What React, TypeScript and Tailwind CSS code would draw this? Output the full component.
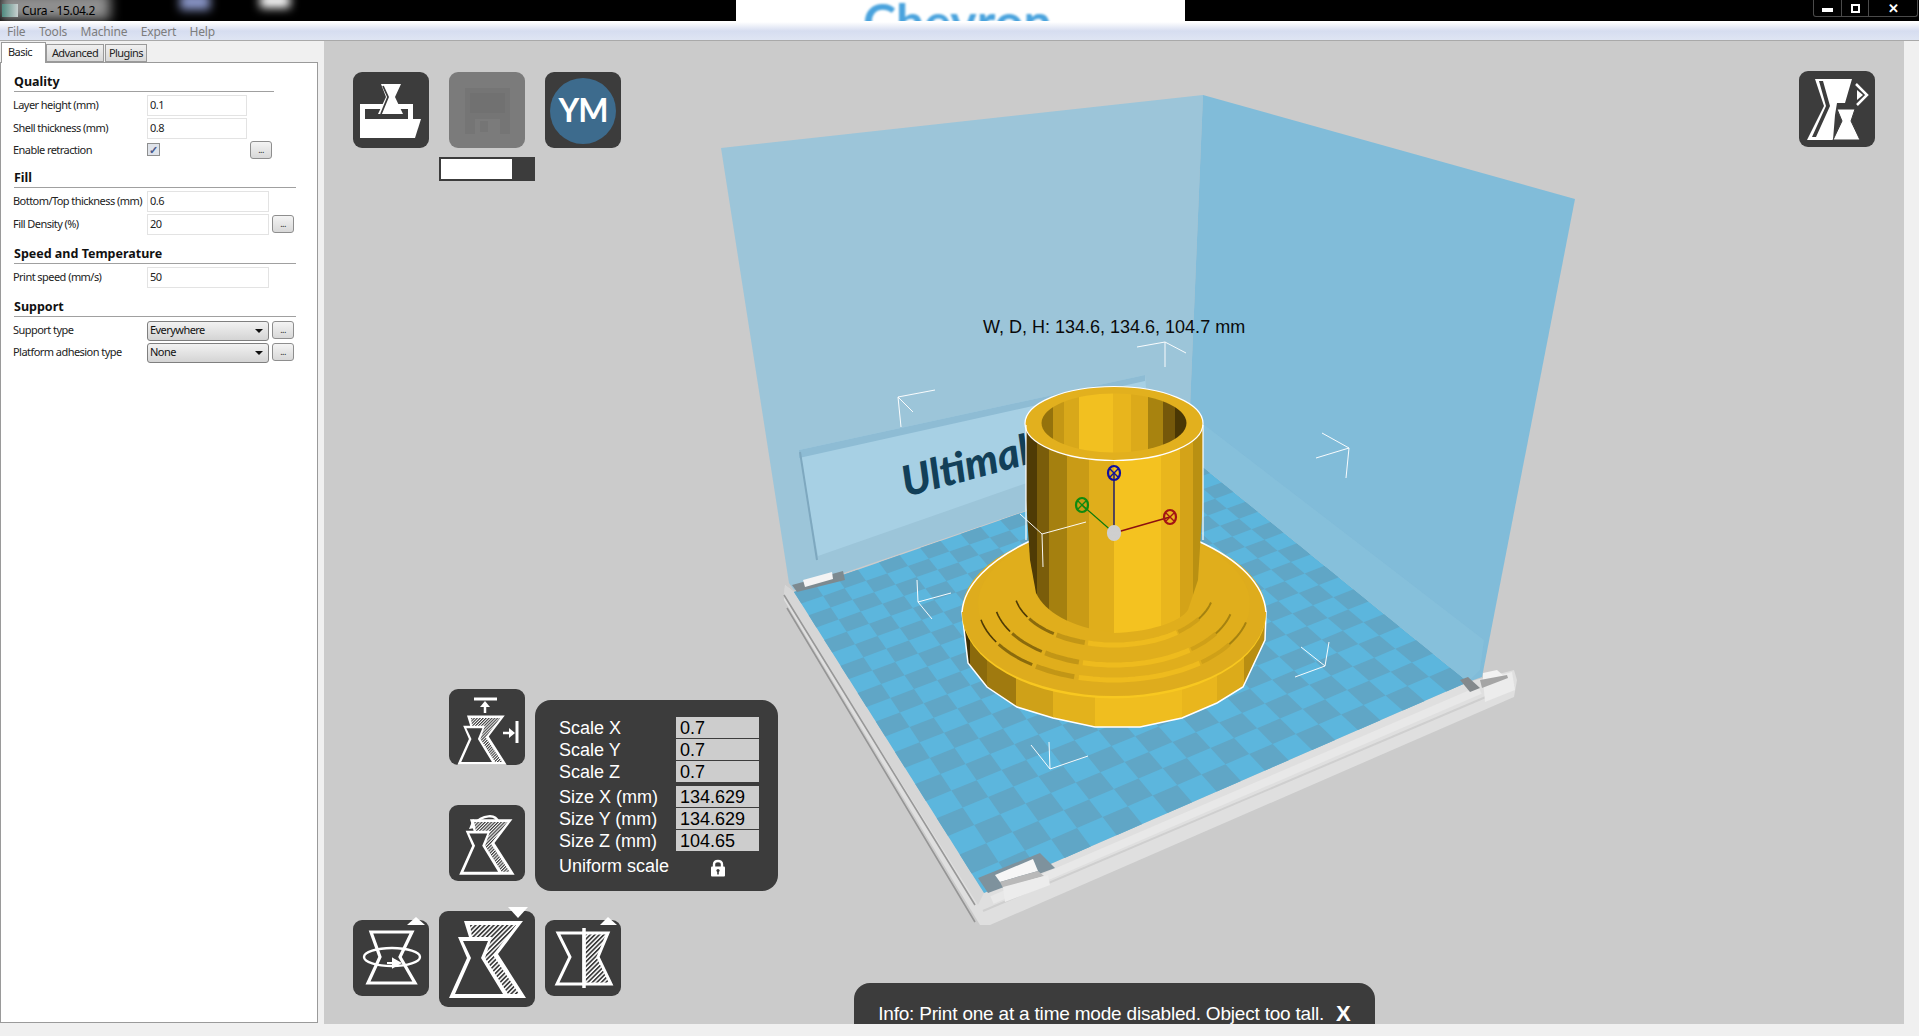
import React from 'react';

const uiFont = 'font-["Noto_Sans",sans-serif]';
const toolFont = 'font-["Liberation_Sans",Arial,sans-serif]';

// projective map of the build plate: (0,0) back, (1,0) right, (1,1) front, (0,1) left
const [x0, y0, x1, y1, x2, y2, x3, y3] = [1188, 455, 1468, 682, 984, 893, 794, 592];
const den = (x1 - x2) * (y3 - y2) - (x3 - x2) * (y1 - y2);
const sx = x0 - x1 + x2 - x3;
const sy = y0 - y1 + y2 - y3;
const pg = (sx * (y3 - y2) - (x3 - x2) * sy) / den;
const ph = ((x1 - x2) * sy - sx * (y1 - y2)) / den;
function platePoint(u: number, v: number) {
  const w = pg * u + ph * v + 1;
  const x = ((x1 - x0 + pg * x1) * u + (x3 - x0 + ph * x3) * v + x0) / w;
  const y = ((y1 - y0 + pg * y1) * u + (y3 - y0 + ph * y3) * v + y0) / w;
  return `${x.toFixed(1)},${y.toFixed(1)}`;
}

function Checker() {
  const n = 20;
  const cells: React.ReactNode[] = [];
  for (let i = 0; i < n; i++) {
    for (let j = 0; j < n; j++) {
      if ((i + j) % 2 === 0) continue;
      const pts = [platePoint(i / n, j / n), platePoint((i + 1) / n, j / n), platePoint((i + 1) / n, (j + 1) / n), platePoint(i / n, (j + 1) / n)].join(' ');
      cells.push(<polygon key={`${i}-${j}`} points={pts} fill="#60a6c6" />);
    }
  }
  return (
    <g>
      <polygon points={`${x0},${y0} ${x1},${y1} ${x2},${y2} ${x3},${y3}`} fill="#5cb6dd" />
      {cells}
    </g>
  );
}

const brackets = [
  'M1137 347L1165 342L1186 353M1165 342V367',
  'M935 390L898 397L913 412M898 397L901 427',
  'M1322 433L1349 448L1316 458M1349 448L1346 478',
  'M1086 522L1042 534L1020 514M1042 534L1043 567',
  'M951 593L918 602L917 580M918 602L932 619',
  'M1329 642L1325 666L1301 647M1325 666L1295 677',
  'M1088 756L1050 769L1031 745M1050 769L1049 742',
];

// one step on the skirt, split in shaded stretches by angle
const ringStretches = [
  { from: 168, to: 148, width: 1.6, color: '#4f3b05' },
  { from: 148, to: 125, width: 3, color: '#8a6a0c' },
  { from: 125, to: 105, width: 5, color: '#c29616' },
  { from: 105, to: 50, width: 5, color: '#eebb1e' },
  { from: 50, to: 32, width: 4, color: '#cfa018' },
  { from: 32, to: 12, width: 2, color: '#a58210' },
];

function Ring({ cy, rx, ry }: { cy: number; rx: number; ry: number }) {
  return (
    <g fill="none">
      {ringStretches.map((s) => {
        const pts: string[] = [];
        for (let a = s.from; a >= s.to; a -= 3) {
          const r = (a * Math.PI) / 180;
          pts.push(`${(1114 + rx * Math.cos(r)).toFixed(1)},${(cy + ry * Math.sin(r)).toFixed(1)}`);
        }
        return <polyline key={s.from} points={pts.join(' ')} stroke={s.color} strokeWidth={s.width} />;
      })}
    </g>
  );
}

function Knob({ x, y, color, fill = 'none' }: { x: number; y: number; color: string; fill?: string }) {
  return (
    <g stroke={color} fill={fill} strokeWidth="2.2">
      <ellipse cx={x} cy={y} rx="6" ry="7" />
      <path d={`M${x - 4} ${y - 4}L${x + 4} ${y + 4}M${x + 4} ${y - 4}L${x - 4} ${y + 4}`} strokeWidth="1.4" />
    </g>
  );
}

function Stops({ list }: { list: [number, string][] }) {
  // hard stops, one flat colour per facet
  return (
    <>
      {list.map(([end, color], i) => (
        <React.Fragment key={i}>
          <stop offset={i === 0 ? 0 : list[i - 1][0]} stopColor={color} />
          <stop offset={end} stopColor={color} />
        </React.Fragment>
      ))}
    </>
  );
}

function Scene() {
  return (
    <svg className="absolute inset-0 h-full w-full" viewBox="324 41 1580 983">
      <defs>
        <linearGradient id="body" x1="0" x2="1" y1="0" y2="0">
          <Stops list={[[0.06, '#4f3b05'], [0.13, '#7a5d0a'], [0.234, '#a5800f'], [0.356, '#c99b16'], [0.495, '#e0ae1b'], [0.762, '#f4c220'], [0.871, '#e9b61d'], [0.941, '#d4a318'], [1, '#b99012']]} />
        </linearGradient>
        <linearGradient id="hole" x1="0" x2="1" y1="0" y2="0">
          <Stops list={[[0.08, '#94720c'], [0.154, '#c49715'], [0.26, '#d8a81a'], [0.494, '#f2c020'], [0.62, '#e8b51d'], [0.736, '#dcaa1a'], [0.84, '#a8830f'], [0.92, '#75580a'], [1, '#4a3704']]} />
        </linearGradient>
        <linearGradient id="skirt" x1="0" x2="1" y1="0" y2="0">
          <Stops list={[[0.026, '#3f2f03'], [0.083, '#8b6a0c'], [0.178, '#a07a0f'], [0.298, '#cfa118'], [0.438, '#e3b21c'], [0.586, '#f0be1f'], [0.723, '#efbd1f'], [0.838, '#e9b61d'], [0.927, '#dcab1a'], [1, '#b98e12']]} />
        </linearGradient>
      </defs>

      {/* plate rim */}
      <polygon points="785,585 794,592 984,893 1468,682 1514,670 1517,680 1514,697 990,925 980,925 974,915 784,600" fill="#dfdfdf" />
      <polygon points="785,585 794,592 984,893 978,905 784,596" fill="#d6d6d6" />
      <path d="M784 595L975 905M787 608L975 922" stroke="#8c8c8c" strokeWidth="1.6" fill="none" opacity=".85" />
      <path d="M983 911L1514 685" stroke="#cfcfcf" strokeWidth="2" fill="none" />
      <path d="M992 900L1480 690" stroke="#e8e8e8" strokeWidth="8" fill="none" />

      <Checker />

      {/* left wall and sign */}
      <polygon points="721,148 1203,95 1188,455 794,590 789,583" fill="#9cc5d9" />
      <polygon points="799,450 1145,375 1150,440 818,556" fill="#a7d0e4" />
      <polygon points="799,450 1145,375 1145,381 799,458" fill="#8ebcd4" />
      <path d="M800 452L817 560" stroke="#7ea8bf" strokeWidth="2" fill="none" />
      <text x="906" y="497" transform="rotate(-15 906 497)" fontFamily="Lato, sans-serif" fontWeight="900" fontStyle="italic" fontSize="42" fill="#123f58">Ultimaker</text>

      {/* right wall */}
      <polygon points="1203,95 1575,199 1482,677 1468,682 1188,455" fill="#81bcd9" />
      <polygon points="1188,455 1468,682 1480,670 1484,640 1198,420" fill="#8ac2dc" opacity=".55" />

      {/* clips on the plate corners */}
      <polygon points="792,585 843,571 845,580 797,592" fill="#7d8a90" />
      <polygon points="803,580 832,572 833,579 805,587" fill="#f4f4f4" />
      <polygon points="978,878 1040,853 1055,868 988,893" fill="#7e929d" />
      <polygon points="995,875 1033,859 1038,871 1000,882" fill="#f6f6f6" />
      <polygon points="1000,882 1038,871 1044,876 1003,888" fill="#b9b9b9" />
      <polygon points="1003,887 1048,875 1050,885 1005,902" fill="#ececec" />
      <polygon points="1483,680 1512,672 1515,690 1485,702" fill="#ececec" />
      <polygon points="1460,680 1468,677 1480,688 1470,692" fill="#84898c" />
      <polygon points="1483,673 1497,670 1505,677 1483,680" fill="#f2f2f2" />
      <polygon points="1480,680 1507,675 1508,678 1482,688" fill="#a5a5a5" />

      {/* printed part */}
      <polygon points="962,612 968,663 987,687 1017,707 1053,718 1095,727 1140,727 1182,718 1217,703 1243,687 1265,640 1266,612" fill="url(#skirt)" stroke="#fff" strokeWidth="1.5" />
      <ellipse cx="1114" cy="613.5" rx="152" ry="85" fill="#f8c820" />
      <ellipse cx="1114" cy="612" rx="152" ry="84" fill="#deac1d" stroke="#fff" strokeWidth="0" />
      <path d="M1030 541C990 560 964 585 962 612M1198 541C1240 560 1264 585 1266 612" fill="none" stroke="#fff" strokeWidth="1.5" />
      <ellipse cx="1114" cy="604" rx="136" ry="76" fill="#e0ae1c" />
      <Ring cy={604} rx={136} ry={76} />
      <Ring cy={598} rx={120} ry={67} />
      <Ring cy={589} rx={100} ry={56} />
      <path d="M1026 425V500L1030 560L1036 593C1045 612 1070 627 1113 633C1150 632 1180 622 1188 610L1198 580L1203 500V425Z" fill="url(#body)" />
      <ellipse cx="1114" cy="423.5" rx="89" ry="37" fill="#e2b01e" stroke="#fff" strokeWidth="1.2" />
      <ellipse cx="1114" cy="423" rx="72.5" ry="29.5" fill="url(#hole)" />
      <path d="M1026 425V540M1203 425V540" stroke="#fff" strokeWidth="1.2" fill="none" />

      {/* selection corners */}
      <path d={brackets.join('')} stroke="#fff" strokeWidth="1" fill="none" opacity=".95" />

      {/* gizmo */}
      <path d="M1114 533V473" stroke="#14146e" strokeWidth="1.4" />
      <path d="M1114 533L1082 505" stroke="#0c7a0c" strokeWidth="1.2" />
      <path d="M1114 533L1170 517" stroke="#8c1010" strokeWidth="1.4" />
      <Knob x={1114} y={473} color="#0e0ea0" />
      <Knob x={1082} y={505} color="#0f8a0f" />
      <Knob x={1170} y={517} color="#a31414" />
      <Knob x={1114} y={533} color="#cfcfcf" fill="#cfcfcf" />

      <text x="983" y="333" fontFamily="'Liberation Sans', sans-serif" fontSize="18" fill="#0a0a0a">W, D, H: 134.6, 134.6, 104.7 mm</text>
    </svg>
  );
}

function Hatch({ id }: { id: string }) {
  return (
    <pattern id={id} width="3.2" height="3.2" patternUnits="userSpaceOnUse" patternTransform="rotate(45)">
      <rect width="3.2" height="3.2" fill="#fff" />
      <rect width="1.7" height="3.2" fill="#3c3c3c" />
    </pattern>
  );
}

function ToolButton({ className, size = 76, children }: { className: string; size?: number; children: React.ReactNode }) {
  return (
    <div className={`absolute rounded-[9px] bg-[#3c3c3c] ${className}`} style={{ width: size, height: size }}>
      <svg width={size} height={size} viewBox={`0 0 ${size} ${size}`} className="overflow-visible">
        {children}
      </svg>
    </div>
  );
}

function HourglassScale({ id, s = 1, dx = 0, dy = 0 }: { id: string; s?: number; dx?: number; dy?: number }) {
  return (
    <g transform={`translate(${dx} ${dy}) scale(${s})`}>
      <Hatch id={id} />
      <path d="M10 87H87L59 43L84 10H25L30 26H19L28 47Z" fill="#fff" />
      <path d="M31 14H77L54 44L80 83H69L46 47L53 26H33Z" fill={`url(#${id})`} />
      <path d="M16 83L32 47L24 30H49L42 47L64 83Z" fill="#3c3c3c" />
    </g>
  );
}

function Triangle({ points }: { points: string }) {
  return <polygon points={points} fill="#fff" />;
}

function LockGlyph() {
  return (
    <svg width="16" height="18" viewBox="0 0 16 18">
      <path d="M4 8V5.5C4 3 5.8 2 8 2C10.2 2 12 3 12 5.5V8" fill="none" stroke="#fff" strokeWidth="2.4" />
      <rect x="1" y="7.5" width="14" height="10" rx="1" fill="#fff" />
      <circle cx="8" cy="11.5" r="1.6" fill="#3c3c3c" />
      <rect x="7.2" y="12" width="1.6" height="3.5" fill="#3c3c3c" />
    </svg>
  );
}

function ScalePanel() {
  const rows = [
    { label: 'Scale X', value: '0.7' },
    { label: 'Scale Y', value: '0.7' },
    { label: 'Scale Z', value: '0.7' },
  ];
  const sizes = [
    { label: 'Size X (mm)', value: '134.629' },
    { label: 'Size Y (mm)', value: '134.629' },
    { label: 'Size Z (mm)', value: '104.65' },
  ];
  return (
    <div className={`absolute left-[211px] top-[659px] flex h-[191px] w-[243px] flex-col rounded-[16px] bg-[#3c3c3c] pl-[24px] pt-[17px] text-[18px] leading-[22px] text-white ${toolFont}`}>
      <div className="flex flex-col gap-px">
        {rows.map((r) => (
          <div key={r.label} className="flex h-[21px] items-center">
            <span className="w-[117px]">{r.label}</span>
            <span className="h-[21px] w-[83px] bg-[#cdcdcd] pl-[4px] text-black">{r.value}</span>
          </div>
        ))}
      </div>
      <div className="mt-[4px] flex flex-col gap-px">
        {sizes.map((r) => (
          <div key={r.label} className="flex h-[21px] items-center">
            <span className="w-[117px]">{r.label}</span>
            <span className="h-[21px] w-[83px] bg-[#cdcdcd] pl-[4px] text-black">{r.value}</span>
          </div>
        ))}
      </div>
      <div className="mt-[4px] flex h-[22px] items-center">
        <span className="w-[117px]">Uniform scale</span>
        <span className="flex w-[83px] justify-center pt-[4px]">
          <LockGlyph />
        </span>
      </div>
    </div>
  );
}

function Overlays() {
  return (
    <>
      <ToolButton className="left-[29px] top-[31px]">
        <path fillRule="evenodd" d="M7 32H60V47H55V37H12V47H7Z" fill="#fff" />
        <path d="M7 66V47H68L62 66Z" fill="#fff" />
        <path d="M28 12H48L42 25L50 42H25L33 25Z" fill="#fff" />
        <path d="M30 14L35 25L28 42" stroke="#3c3c3c" strokeWidth="1.8" fill="none" />
      </ToolButton>
      <ToolButton className="left-[125px] top-[31px] !bg-[#7b7b7b]">
        <path d="M16 16H61V62H16Z" fill="#757575" />
        <rect x="21" y="21" width="35" height="20" fill="#717171" />
        <rect x="26" y="47" width="25" height="15" fill="#7b7b7b" />
        <rect x="31" y="49" width="8" height="11" fill="#757575" />
      </ToolButton>
      <ToolButton className="left-[221px] top-[31px]">
        <circle cx="38" cy="39" r="33" fill="#3d6b8d" />
        <text x="38" y="50" textAnchor="middle" fontFamily="Lato, sans-serif" fontWeight="700" fontSize="32" letterSpacing="-1" fill="#fff">YM</text>
      </ToolButton>
      <div className="absolute left-[115px] top-[116px] flex h-[24px] w-[96px] border-2 border-[#3c3c3c] bg-[#3c3c3c]">
        <div className="h-full w-[71px] bg-white" />
      </div>

      <ToolButton className="left-[1475px] top-[30px]">
        <path d="M16 8H53L46 32H38L36 44L34 69H8L25 35Z" fill="#fff" />
        <path d="M20 10L27 35L13 66H17L31 35L24 10Z" fill="#3c3c3c" />
        <path d="M38 38H56L52 50L61 69H34L43 50Z" fill="#fff" stroke="#3c3c3c" strokeWidth="1" />
        <path d="M57 13L68 24L58 34" stroke="#fff" strokeWidth="2.5" fill="none" />
        <path d="M58 19L64 24L58 29Z" fill="#fff" />
      </ToolButton>

      <ToolButton className="left-[125px] top-[648px]">
        <path d="M25 10H48" stroke="#fff" strokeWidth="3" />
        <path d="M36 24V14" stroke="#fff" strokeWidth="2.5" />
        <path d="M31 18L36 12L41 18Z" fill="#fff" />
        <path d="M68 32V54" stroke="#fff" strokeWidth="3" />
        <path d="M54 44H62" stroke="#fff" strokeWidth="2.5" />
        <path d="M60 39L66 44L60 49Z" fill="#fff" />
        <HourglassScale id="hatchA" s={0.64} dx={2} dy={20} />
      </ToolButton>
      <ToolButton className="left-[125px] top-[764px]">
        <path d="M49 17C47 9 34 9 24 20" stroke="#fff" strokeWidth="2.5" fill="none" />
        <path d="M20 24L32 22L24 14Z" fill="#fff" />
        <HourglassScale id="hatchB" s={0.72} dx={3} dy={7} />
      </ToolButton>

      <ScalePanel />

      <ToolButton className="left-[29px] top-[879px]">
        <path d="M18 12H59L47 37L62 63H15L27 37Z" fill="none" stroke="#fff" strokeWidth="3.2" />
        <ellipse cx="39" cy="37" rx="28" ry="9" fill="none" stroke="#fff" strokeWidth="2.4" />
        <path d="M34 43H44M40 39L47 43L40 47Z" stroke="#fff" strokeWidth="2" fill="#fff" />
        <Triangle points="54,5 72,5 63,-3" />
      </ToolButton>
      <ToolButton className="left-[115px] top-[870px]" size={96}>
        <HourglassScale id="hatchC" />
        <Triangle points="69,-4 89,-4 79,7" />
      </ToolButton>
      <ToolButton className="left-[221px] top-[879px]">
        <Hatch id="hatchD" />
        <path d="M39 13H63L53 37L66 64H39Z" fill="url(#hatchD)" stroke="#fff" strokeWidth="3" />
        <path d="M39 13H13L25 37L12 64H39" fill="none" stroke="#fff" strokeWidth="3" />
        <path d="M39 8V68" stroke="#fff" strokeWidth="3.5" />
        <Triangle points="55,5 72,5 63,-3" />
      </ToolButton>

      <div className={`absolute bottom-0 left-[530px] flex h-[41px] w-[521px] items-start justify-center gap-[12px] rounded-t-[16px] bg-[#3c3c3c] pt-[21px] text-[19px] leading-[20px] text-white ${toolFont}`}>
        <span className="tracking-[-0.2px]">Info: Print one at a time mode disabled. Object too tall.</span>
        <span className="text-[22px] font-bold leading-[20px]">X</span>
      </div>
    </>
  );
}

function TextField({ value, wide }: { value: string; wide?: boolean }) {
  return (
    <div className={`flex h-[21px] items-center border border-[#e3e3e3] bg-white pl-[2px] text-[#222] ${wide ? 'w-[122px]' : 'w-[100px]'}`}>{value}</div>
  );
}

function DotsButton() {
  return (
    <div className="-mt-[2px] flex h-[18px] w-[22px] items-center justify-center rounded-[3px] border border-[#8e8e8e] bg-gradient-to-b from-[#f4f4f4] to-[#d8d8d8] text-[9px] leading-none text-[#222]">...</div>
  );
}

function SelectField({ value }: { value: string }) {
  return (
    <div className="relative flex h-[20px] w-[122px] items-center rounded-[3px] border border-[#7f7f7f] bg-gradient-to-b from-[#f2f2f2] to-[#d4d4d4] pl-[2px] text-[#111]">
      {value}
      <span className="absolute right-[5px] top-[7px] h-0 w-0 border-x-[4px] border-t-[4px] border-x-transparent border-t-[#111]" />
    </div>
  );
}

function Row({ label, children }: { label: string; children: React.ReactNode }) {
  return (
    <div className="flex h-[21px] items-center">
      <span className="w-[134px] whitespace-nowrap">{label}</span>
      <div className="flex items-center gap-[3px]">{children}</div>
    </div>
  );
}

function Heading({ title, short, className = '' }: { title: string; short?: boolean; className?: string }) {
  return (
    <div className={`mb-[3px] ml-[1px] h-[19px] border-b border-[#a0a0a0] text-[12.5px] font-bold leading-[18px] tracking-[0px] text-[#111] ${short ? 'w-[260px]' : 'w-[282px]'} ${className}`}>{title}</div>
  );
}

function SettingsPanel() {
  return (
    <div className={`flex w-[324px] shrink-0 flex-col bg-[#f0f0f0] pb-[13px] pr-[6px] pt-[1px] text-[11px] tracking-[-0.55px] text-[#222] ${uiFont}`}>
      <div className="flex h-[20px] items-end pl-[1px] text-[#222]">
        <div className="z-10 -mb-px flex h-[21px] w-[45px] items-start border border-b-0 border-[#9a9a9a] bg-white pl-[6px] pt-[1px]">Basic</div>
        <div className="flex h-[18px] w-[58px] items-center justify-center border border-[#9a9a9a] bg-gradient-to-b from-[#f0f0f0] to-[#d8d8d8]">Advanced</div>
        <div className="ml-px flex h-[18px] w-[42px] items-center justify-center border border-[#9a9a9a] bg-gradient-to-b from-[#f0f0f0] to-[#d8d8d8]">Plugins</div>
      </div>
      <div className="flex flex-1 flex-col border border-[#9a9a9a] bg-white pl-[12px] pt-[10px]">
        <Heading title="Quality" short />
        <div className="flex flex-col gap-[2px]">
          <Row label="Layer height (mm)"><TextField value="0.1" /></Row>
          <Row label="Shell thickness (mm)"><TextField value="0.8" /></Row>
          <div className="-mt-px">
            <Row label="Enable retraction">
              <div className="mr-[87px] -mt-[2px] flex h-[13px] w-[13px] items-center justify-center border border-[#8e8f8f] bg-[#dfe3ea] text-[11px] font-bold leading-none text-[#4a5a8c]">✓</div>
              <DotsButton />
            </Row>
          </div>
        </div>
        <Heading title="Fill" className="mt-[8px]" />
        <div className="flex flex-col gap-[2px]">
          <Row label="Bottom/Top thickness (mm)"><TextField value="0.6" wide /></Row>
          <Row label="Fill Density (%)"><TextField value="20" wide /><DotsButton /></Row>
        </div>
        <Heading title="Speed and Temperature" className="mt-[10px]" />
        <Row label="Print speed (mm/s)"><TextField value="50" wide /></Row>
        <Heading title="Support" className="mt-[10px]" />
        <div className="flex flex-col gap-px">
          <Row label="Support type"><SelectField value="Everywhere" /><DotsButton /></Row>
          <Row label="Platform adhesion type"><SelectField value="None" /><DotsButton /></Row>
        </div>
      </div>
    </div>
  );
}

function TitleBar() {
  return (
    <div className={`relative flex h-[21px] shrink-0 items-center overflow-hidden bg-black ${uiFont}`}>
      <div className="absolute left-0 top-[-8px] h-[28px] w-[110px] bg-[#8f8f8f] blur-[6px]" />
      <div className="absolute left-[180px] top-[-6px] h-[16px] w-[30px] bg-[#8a96c8] blur-[5px]" />
      <div className="absolute left-[260px] top-[-6px] h-[14px] w-[30px] bg-white blur-[5px]" />
      <div className="absolute left-[736px] top-0 h-full w-[449px] overflow-hidden bg-white">
        <span className="absolute left-[127px] top-[-7px] whitespace-nowrap font-['Lato',sans-serif] text-[50px] font-bold leading-[56px] text-[#4aa3dd] blur-[1px]">Chevron</span>
      </div>
      <div className="relative ml-[2px] h-[13px] w-[16px] bg-gradient-to-r from-[#4f8a80] to-[#c8d0d0]" />
      <span className="relative ml-[4px] text-[12px] tracking-[-0.3px] text-black">Cura - 15.04.2</span>
      <div className="absolute right-[1px] top-0 flex h-[17px] w-[105px] rounded-b-[3px] border border-t-0 border-[#4a4a4a] text-white">
        <div className="flex w-[28px] items-center justify-center border-r border-[#4a4a4a]">
          <div className="mt-[4px] h-[4px] w-[11px] bg-white" />
        </div>
        <div className="flex w-[27px] items-center justify-center border-r border-[#4a4a4a]">
          <div className="h-[9px] w-[9px] border-2 border-white" />
        </div>
        <div className="flex flex-1 items-center justify-center text-[13px] font-bold leading-[16px]">✕</div>
      </div>
    </div>
  );
}

function MenuBar() {
  const items = ['File', 'Tools', 'Machine', 'Expert', 'Help'];
  return (
    <div className={`flex h-[20px] shrink-0 items-center gap-[13.5px] border-y border-[#a9a9a9] border-t-[#fff] bg-gradient-to-b from-white via-[#d6ddf0] to-[#dfe5f3] pl-[7px] pt-[1px] text-[12px] tracking-[-0.2px] text-[#7d7d7d] ${uiFont}`}>
      {items.map((item) => (
        <span key={item}>{item}</span>
      ))}
    </div>
  );
}

export default function App() {
  return (
    <div className="flex h-[1036px] w-[1919px] flex-col overflow-hidden bg-[#f0f0f0]">
      <TitleBar />
      <MenuBar />
      <div className="flex flex-1">
        <SettingsPanel />
        <div className="relative h-[983px] w-[1580px] overflow-hidden bg-[#cbcbcb]">
          <Scene />
          <Overlays />
        </div>
      </div>
    </div>
  );
}
